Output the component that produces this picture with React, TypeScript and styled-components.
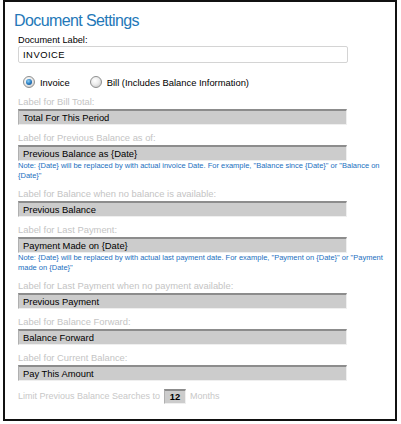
import styled, { createGlobalStyle } from 'styled-components'

const GlobalStyle = createGlobalStyle`
  body {
    margin: 0;
    background: #fff;
    font-family: "Liberation Sans", Arial, sans-serif;
  }
`

const Panel = styled.section`
  box-sizing: border-box;
  margin-left: 3px;
  width: 394px;
  height: 421px;
  border: 2px solid #111;
  background: #fff;
  padding: 0 0 0 13px;
`

const Title = styled.h1`
  margin: 9px 0 0 -4px;
  font-size: 16px;
  line-height: 20px;
  font-weight: normal;
  letter-spacing: -0.6px;
  color: #2478b8;
`

const DocLabel = styled.label`
  display: block;
  margin-top: 3px;
  font-size: 9.2px;
  line-height: 12px;
  color: #000;
`

const TextInput = styled.input`
  display: block;
  box-sizing: border-box;
  width: 330px;
  height: 17px;
  margin: 0;
  padding: 0 4px;
  border: 1px solid #d4d4d4;
  border-radius: 2px;
  font-family: "Liberation Sans", Arial, sans-serif;
  font-size: 9.4px;
  letter-spacing: 0.5px;
  color: #000;
  outline: none;
`

const RadioRow = styled.div`
  display: flex;
  align-items: center;
  height: 13px;
  margin-top: 12.5px;
  padding-left: 5px;
  gap: 20px;
`

const RadioOption = styled.label`
  display: flex;
  align-items: center;
  gap: 5px;
  font-size: 9.4px;
  color: #000;
`

const RadioDot = styled.span<{ $checked?: boolean }>`
  position: relative;
  box-sizing: border-box;
  width: 12px;
  height: 12px;
  border-radius: 50%;
  border: 1px solid #8e8f8f;
  background: radial-gradient(circle at 40% 35%, #ffffff 0%, #ececec 45%, #bdbdbd 100%);

  &::after {
    content: '';
    display: ${p => (p.$checked ? 'block' : 'none')};
    position: absolute;
    left: 2px;
    top: 2px;
    width: 6px;
    height: 6px;
    border-radius: 50%;
    background: radial-gradient(circle at 40% 35%, #8fd0f5 0%, #2a7fc4 50%, #0d3f78 100%);
  }
`

const Group = styled.div`
  padding-top: 7px;
`

const FieldLabel = styled.label`
  display: block;
  font-size: 9.4px;
  line-height: 12px;
  color: #c4c4c4;
`

const Field = styled.input`
  display: block;
  box-sizing: border-box;
  width: 329px;
  height: 16px;
  margin: 1px 0 0;
  padding: 0 0 0 4px;
  background: #cccccc;
  border-top: 2px solid #8c8c8c;
  border-left: 1px solid #b0b0b0;
  border-right: 1px solid #efefef;
  border-bottom: 1px solid #efefef;
  font-family: "Liberation Sans", Arial, sans-serif;
  font-size: 9.4px;
  color: #000;
  outline: none;
`

const Note = styled.p`
  margin: 0;
  width: 384px;
  font-size: 7.5px;
  line-height: 10px;
  color: #1b6fc0;
`

const LimitRow = styled.div`
  display: flex;
  align-items: center;
  gap: 4px;
  margin-top: 8px;
  font-size: 9px;
  color: #c8c8c8;
`

const LimitBox = styled.input`
  box-sizing: border-box;
  width: 22px;
  height: 15px;
  margin: 0;
  padding: 0;
  background: #cccccc;
  border-top: 2px solid #8c8c8c;
  border-left: 1px solid #b0b0b0;
  border-right: 1px solid #efefef;
  border-bottom: 1px solid #efefef;
  font-family: "Liberation Sans", Arial, sans-serif;
  font-size: 9.4px;
  font-weight: bold;
  text-align: center;
  color: #000;
  outline: none;
`

const fields: { label: string; value: string; note?: string }[] = [
  { label: 'Label for Bill Total:', value: 'Total For This Period' },
  {
    label: 'Label for Previous Balance as of:',
    value: 'Previous Balance as {Date}',
    note: 'Note: {Date} will be replaced by with actual invoice Date. For example, "Balance since {Date}" or "Balance on {Date}"',
  },
  { label: 'Label for Balance when no balance is available:', value: 'Previous Balance' },
  {
    label: 'Label for Last Payment:',
    value: 'Payment Made on {Date}',
    note: 'Note: {Date} will be replaced by with actual last payment date. For example, "Payment on {Date}" or "Payment made on {Date}"',
  },
  { label: 'Label for Last Payment when no payment available:', value: 'Previous Payment' },
  { label: 'Label for Balance Forward:', value: 'Balance Forward' },
  { label: 'Label for Current Balance:', value: 'Pay This Amount' },
]

const App = () => {
  return (
    <>
      <GlobalStyle />
      <Panel>
        <Title>Document Settings</Title>
        <DocLabel>Document Label:</DocLabel>
        <TextInput defaultValue="INVOICE" />
        <RadioRow>
          <RadioOption>
            <RadioDot $checked />
            Invoice
          </RadioOption>
          <RadioOption>
            <RadioDot />
            Bill (Includes Balance Information)
          </RadioOption>
        </RadioRow>
        {fields.map(f => (
          <Group key={f.label}>
            <FieldLabel>{f.label}</FieldLabel>
            <Field readOnly value={f.value} />
            {f.note && <Note>{f.note}</Note>}
          </Group>
        ))}
        <LimitRow>
          Limit Previous Balance Searches to
          <LimitBox readOnly value="12" />
          Months
        </LimitRow>
      </Panel>
    </>
  )
}

export default App
